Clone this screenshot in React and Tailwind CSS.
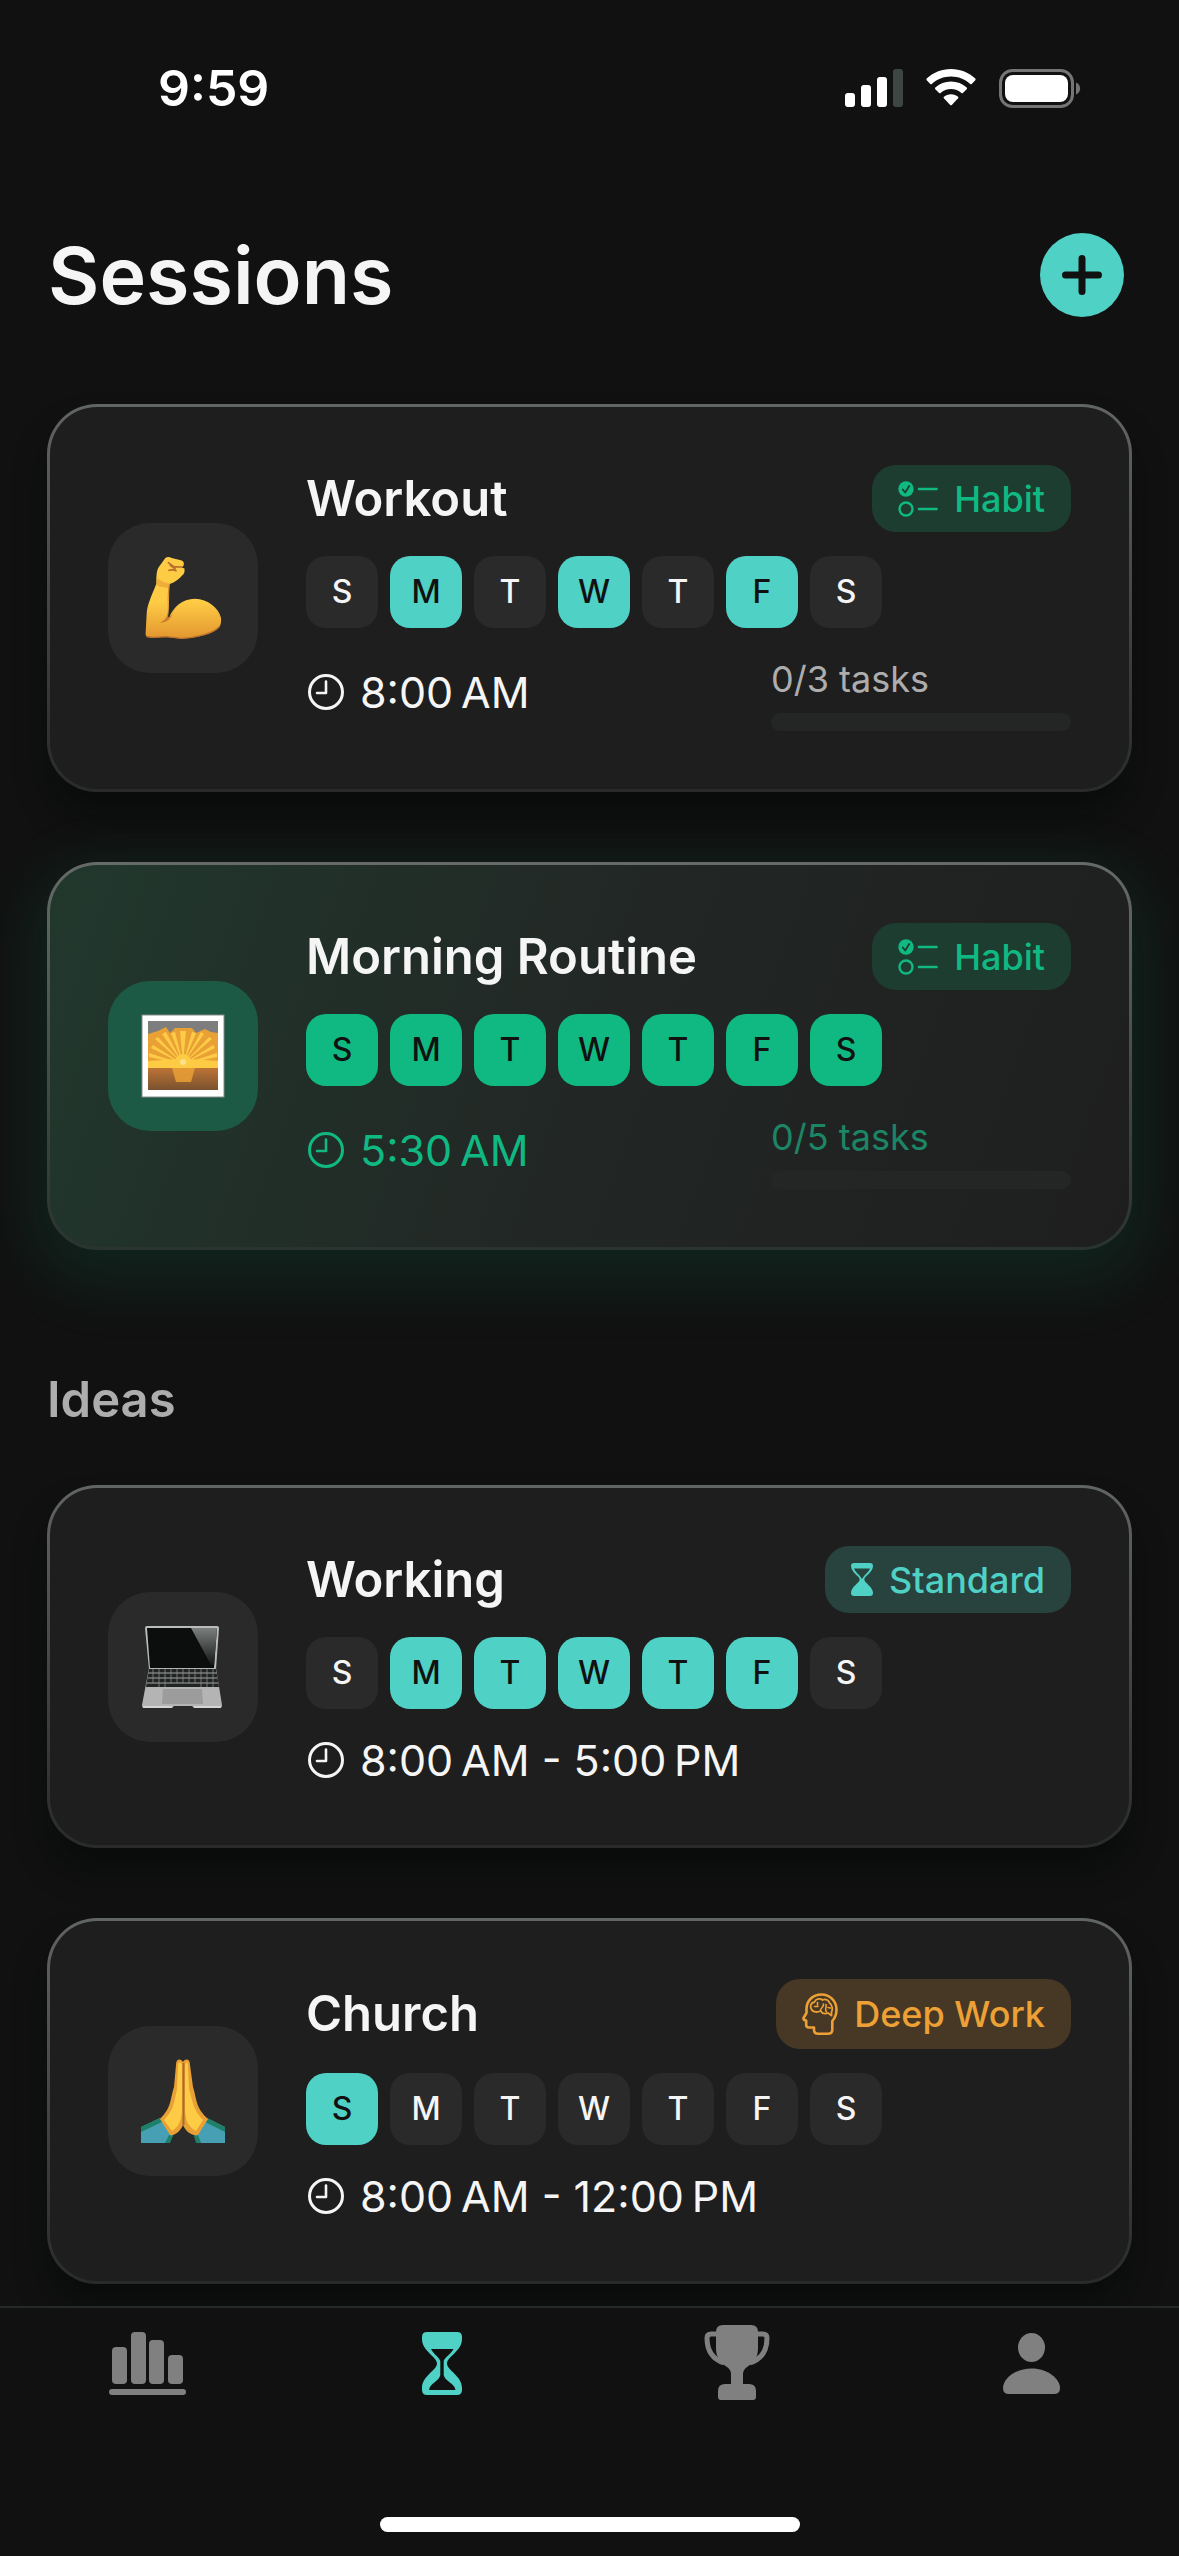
import React, { useState } from "react";

const DAYS = ["S", "M", "T", "W", "T", "F", "S"];

const Clock = () => (
  <svg className="h-9 w-9 shrink-0" viewBox="0 0 36 36" fill="none" stroke="currentColor" strokeWidth="3" strokeLinecap="round" strokeLinejoin="round">
    <circle cx="18" cy="18" r="16.5" />
    <path d="M18 7.500V19H9" strokeWidth="2.600" />
  </svg>
);

const Checklist = () => (
  <svg className="h-9 w-10" viewBox="0 0 40 36" fill="none" stroke="currentColor" strokeLinecap="round">
    <circle cx="8" cy="8" r="7.700" fill="currentColor" stroke="none" />
    <path d="M4.800 8.500l2.400 3 4-6.500" stroke="#1d3d31" strokeWidth="1.800" strokeLinejoin="round" />
    <circle cx="8" cy="28" r="6.500" strokeWidth="2.400" />
    <path d="M21 8h17.500M21 28h17.500" strokeWidth="2.600" />
  </svg>
);

const SmallHourglass = () => (
  <svg className="h-[33px] w-[22px]" viewBox="0 0 22 33" fill="currentColor">
    <path
      fillRule="evenodd"
      d="M3 0H19Q22 0 22 3C22 9.500 13.300 13 13.300 16.500S22 23.500 22 30Q22 33 19 33H3Q0 33 0 30C0 23.500 8.700 20 8.700 16.500S0 9.500 0 3Q0 0 3 0ZM3 5.500C4.500 9.500 9 12 10.500 15.500H11.500C13 12 17.500 9.500 19 5.500Z"
    />
  </svg>
);

const HeadBrain = () => (
  <svg className="h-[42px] w-9" viewBox="0 0 36 42" fill="none" stroke="currentColor" strokeWidth="2.600" strokeLinejoin="round" strokeLinecap="round">
    <path d="M12 34.500V37Q12 40.700 16 40.700H26Q30.300 40.700 30.300 37V28C33 25 34.500 21 34.500 16.500C34.500 8 28 1.500 19.500 1.500C10.500 1.500 4.500 8 4.500 16V20L1.500 25Q1.200 27 4.200 27.500V32Q4.200 34.500 7 34.500Z" />
    <path d="M9.500 16.500C7.500 13 9 9.500 12.500 9C14 5.500 18.500 5 20.500 7C24 5.500 27 7.500 27.500 10C30.500 12 31 16.500 29.500 19V22.500L26 20C22 21.500 19.500 19.500 18.500 18C15.500 19.500 11 19.500 9.500 16.500Z" strokeWidth="1.800" />
    <path d="M12.500 13.500H16M15.500 9.500V12M18.500 18C18 14.500 22 15 21.500 11M24 11.500C25 15 22 15.500 24.500 19M26 14.500L28.500 15" strokeWidth="1.600" />
  </svg>
);

const Muscle = () => (
  <svg className="h-[84px] w-[84px]" viewBox="123 138 252 252">
    <defs>
      <linearGradient id="arm" x1="0" y1="0" x2="0" y2="1">
        <stop offset="0.550" stopColor="#fecb45" />
        <stop offset="1" stopColor="#e2962f" />
      </linearGradient>
    </defs>
    <path
      d="M196 144C202 139 210 141 215 144L243 151Q254 154 251 166Q249 171 244 173L253 175Q256 188 248 195C238 207 225 217 209 222C206 250 209 290 204 320Q201 329 208 321C220 292 246 266 285 266C324 267 355 293 363 323Q365 340 358 351C339 371 292 384 245 386L199 381L158 383L141 382Q135 377 137 366L140 312C141 282 158 251 169 221C169 202 169 184 176 172Z"
      fill="url(#arm)"
    />
    <path d="M208 220C195 221 183 213 173 205L169 224C178 232 195 231 207 234Z" fill="#e9a035" opacity="0.700" />
    <path d="M207 224C199 260 207 298 202 314C199 326 190 333 180 338C200 337 211 328 218 312C210 321 204 323 204 320Z" fill="#c97a2c" />
    <path d="M205 158L221 170L246 171M211 166L225 176M207 181L218 179L228 182" fill="none" stroke="#b5702b" strokeWidth="5" strokeLinecap="round" />
    <path d="M140 379L158 382L199 380L245 385C290 383 338 371 357 351" fill="none" stroke="#bd732c" strokeWidth="4" />
  </svg>
);

const Sunrise = () => (
  <svg className="h-[84px] w-[84px]" viewBox="0 0 84 84">
    <defs>
      <clipPath id="photo">
        <rect x="7" y="7" width="70" height="69" />
      </clipPath>
      <linearGradient id="sea" x1="0" y1="0" x2="0" y2="1">
        <stop offset="0" stopColor="#bd7336" />
        <stop offset="1" stopColor="#79522e" />
      </linearGradient>
    </defs>
    <rect x="1" y="1" width="82" height="82" fill="#fff" stroke="#8a8a8a" strokeWidth="1" />
    <g clipPath="url(#photo)">
      <rect x="7" y="7" width="70" height="69" fill="#7e7e7e" />
      <path d="M7 20L17 17L25 13L29 19L34 14H51L55 19L64 15L70 18L77 19V60H7Z" fill="#e9a035" />
      <path d="M42 50L10 34L12 31ZM42 50L14 25L17 23ZM42 50L21 20L25 18ZM42 50L30 19L34 18ZM42 50L39 17H45ZM42 50L51 18L55 19ZM42 50L60 18L63 20ZM42 50L68 23L71 25ZM42 50L72 31L74 34ZM42 50L8 43V39ZM42 50L76 39V43Z" fill="#fecb45" />
      <circle cx="42" cy="48" r="8" fill="#fecb45" />
      <path d="M7 47L34 45H50L77 47V54H7Z" fill="#fecb45" />
      <rect x="7" y="54" width="70" height="22" fill="url(#sea)" />
      <path d="M31 54H54L50 68H35Z" fill="#e9a035" opacity="0.850" />
      <circle cx="42" cy="48" r="3" fill="#ffe08a" />
    </g>
  </svg>
);

const Laptop = () => (
  <svg className="h-[84px] w-[84px]" viewBox="0 0 84 84">
    <defs>
      <linearGradient id="glare" x1="0" y1="0" x2="0" y2="1">
        <stop offset="0" stopColor="#7b7f7e" />
        <stop offset="1" stopColor="#141716" />
      </linearGradient>
    </defs>
    <path d="M6 1H76Q78 1 78 3L75 44H8L4 3Q4 1 6 1Z" fill="#b9bcbb" />
    <path d="M6 3H76L73 43H9Z" fill="#0b0e0d" />
    <path d="M50 3H76L73 40H70Z" fill="url(#glare)" />
    <path d="M8 43H75L81 80Q81 83 79 83H53L51 81H33L31 83H3Q1 83 1 80Z" fill="#b4b4b4" />
    <path d="M8 44H75L78 62H5Z" fill="#202423" />
    <path d="M7 48H76M7 53H76M6 58H77" stroke="#a5a5a5" strokeWidth="1" />
    <path d="M12 44V58M18 44V62M24 44V62M30 44V58M36 44V58M42 44V58M48 44V58M54 44V58M60 44V62M66 44V62M72 44V62" stroke="#8d8d8d" strokeWidth="0.800" />
    <path d="M22 64H61L62 79H21Z" fill="#9c9c9c" />
    <path d="M2 82H31M53 82H80" stroke="#dedede" strokeWidth="1.500" />
  </svg>
);

const Prayer = () => (
  <svg className="h-[84px] w-[84px]" viewBox="0 0 84 84">
    <path d="M0 68L19 59L32 76L25 84H0ZM84 68L66 59L53 76L60 84H84Z" fill="#469fb3" />
    <path d="M0 68L19 59L21 63L0 73ZM84 68L66 59L64 63L84 73ZM28 76L32 77L29 84H24ZM57 76L53 77L55 84H60Z" fill="#1e8068" />
    <path d="M42 3C39 -1 35 0 35 6L33 28C29 40 31 48 19 60L29 76C33 77 39 73 42 66C45 73 51 77 57 76L67 60C54 48 56 40 52 28L49 6C49 0 45 -1 42 3Z" fill="#e9a035" />
    <path d="M41 5C38 2 37 4 37 8L36 30C33 43 33 51 23 61L31 72C39 67 41 59 41 50ZM44 5C47 2 47 4 47 8L48 30C52 43 52 51 62 61L55 72C46 67 44 59 44 50Z" fill="#fecb45" />
    <path d="M42.500 4V66" stroke="#a9682c" strokeWidth="2" />
  </svg>
);

const kinds = {
  habit: { label: "Habit", Icon: Checklist, style: "bg-[#1d3d31] text-[#10b981]" },
  standard: { label: "Standard", Icon: SmallHourglass, style: "bg-[#28423d] text-[#4fd1c5]" },
  deep: { label: "Deep Work", Icon: HeadBrain, style: "bg-[#463824] text-[#eda035] h-[70px]" },
};

const upcoming = [
  { title: "Workout", Emoji: Muscle, kind: "habit", days: [1, 3, 5], time: "8:00\u202fAM", tasks: [0, 3] },
  { title: "Morning Routine", Emoji: Sunrise, kind: "habit", days: [0, 1, 2, 3, 4, 5, 6], time: "5:30\u202fAM", tasks: [0, 5], active: true },
];

const ideas = [
  { title: "Working", Emoji: Laptop, kind: "standard", days: [1, 2, 3, 4, 5], time: "8:00\u202fAM - 5:00\u202fPM" },
  { title: "Church", Emoji: Prayer, kind: "deep", days: [0], time: "8:00\u202fAM - 12:00\u202fPM" },
];

const Badge = ({ kind }) => {
  const { label, Icon, style } = kinds[kind];
  return (
    <span className={`flex min-h-[67px] shrink-0 items-center gap-4 rounded-3xl px-[26px] text-[36px] leading-[44px] font-medium ${style}`}>
      <Icon />
      {label}
    </span>
  );
};

const DayChip = ({ day, on, active }) => {
  const color = on ? (active ? "bg-[#10b981] text-[#111111]" : "bg-[#4fd1c5] text-[#111111]") : "bg-[#2a2a2a] text-[#f5f5f5]";
  return <li className={`flex h-18 w-18 items-center justify-center rounded-[20px] text-[32px] font-medium ${color}`}>{day}</li>;
};

const SessionCard = ({ title, Emoji, kind, days, time, tasks, active }) => (
  <article
    className={`rounded-[50px] bg-linear-to-b p-[3px] ${
      active
        ? "from-[#666b69] to-[#29332f] shadow-[0_20px_60px_18px_rgba(16,185,129,0.110)]"
        : "from-[#626565] to-[#292b2a] shadow-[0_24px_30px_rgba(4,8,7,0.500)]"
    }`}
  >
    <div
      className={`flex items-center gap-12 rounded-[47px] p-[58px] ${
        active ? "bg-[linear-gradient(110deg,#21382d,#222725_50%,#1e1e1e)]" : "bg-[#1e1e1e]"
      }`}
    >
      <div className={`flex h-[150px] w-[150px] shrink-0 items-center justify-center rounded-[42px] ${active ? "bg-[#1d5a45]" : "bg-[#2a2a2a]"}`}>
        <Emoji />
      </div>
      <div className="flex min-w-0 flex-1 flex-col gap-6">
        <div className="flex items-center justify-between">
          <h3 className="text-[49px] leading-[60px] font-semibold text-[#f5f5f5]">{title}</h3>
          <Badge kind={kind} />
        </div>
        <ul className="flex gap-3">
          {DAYS.map((day, i) => (
            <DayChip key={i} day={day} on={days.includes(i)} active={active} />
          ))}
        </ul>
        <div className="flex items-center justify-between">
          <p className={`flex items-center gap-4 pl-[2px] text-[43px] leading-[54px] ${active ? "text-[#10b981]" : "text-[#f5f5f5]"}`}>
            <Clock />
            {time}
          </p>
          {tasks && (
            <div className="flex w-[300px] flex-col gap-[6px]">
              <span className={`text-[36px] leading-[55px] ${active ? "text-[#1c8565]" : "text-[#adadad]"}`}>
                {tasks[0]}/{tasks[1]} tasks
              </span>
              <div className="h-[18px] overflow-hidden rounded-full bg-[#242625]">
                <div className="h-full bg-[#10b981]" style={{ width: `${(tasks[0] / tasks[1]) * 100}%` }} />
              </div>
            </div>
          )}
        </div>
      </div>
    </div>
  </article>
);

const StatusBar = () => (
  <div className="flex items-center justify-between pt-[57px] pr-[98px] pl-[158px] text-white">
    <span className="text-[50px] leading-[62px] font-semibold">9:59</span>
    <div className="flex items-center gap-[23px]">
      {/* Signal */}
      <svg className="h-[38px] w-[58px]" viewBox="0 0 58 38" fill="currentColor">
        <rect x="0" y="24" width="10" height="14" rx="3" />
        <rect x="16" y="16" width="10" height="22" rx="3" />
        <rect x="32" y="8" width="10" height="30" rx="3" />
        <rect x="48" y="0" width="10" height="38" rx="3" fill="#3e4644" />
      </svg>
      {/* Wi-Fi */}
      <svg className="h-[38px] w-[50px]" viewBox="0 0 50 38" fill="currentColor">
        <path d="M25 0C15.500 0 7 3.600.700 9.600Q0 10.400.700 11.200L4.300 14.900Q5 15.500 5.800 14.900C11 10.100 17.600 7.400 25 7.400S39 10.100 44.200 14.900Q45 15.500 45.700 14.900L49.300 11.200Q50 10.400 49.300 9.600C43 3.600 34.500 0 25 0Z" />
        <path d="M25 12.600C19 12.600 13.500 14.800 9.300 18.600Q8.500 19.400 9.300 20.200L13.100 24Q13.800 24.600 14.600 24C17.400 21.500 21 20 25 20S32.600 21.500 35.400 24Q36.200 24.600 36.900 24L40.700 20.200Q41.500 19.400 40.700 18.600C36.500 14.800 31 12.600 25 12.600Z" />
        <path d="M25 25.200C22.300 25.200 19.800 26.200 17.900 27.800Q17.200 28.500 17.900 29.300L24.200 35.900Q25 36.600 25.800 35.900L32.100 29.300Q32.800 28.500 32.100 27.800C30.200 26.200 27.700 25.200 25 25.200Z" />
      </svg>
      {/* Battery */}
      <svg className="h-[39px] w-[82px]" viewBox="0 0 82 39">
        <rect x="1.500" y="1.500" width="72" height="36" rx="12" fill="none" stroke="#757575" strokeWidth="3" />
        <rect x="6" y="6" width="63" height="27" rx="8" fill="#fff" />
        <path d="M77 13.500C82.500 15.500 82.500 23.500 77 25.500Z" fill="#757575" />
      </svg>
    </div>
  </div>
);

const tabs = [
  {
    name: "Stats",
    icon: (
      <svg className="h-[76px] w-[77px]" viewBox="0 0 77 76" fill="currentColor">
        <rect x="3" y="22" width="15" height="37" rx="4" />
        <rect x="22" y="7" width="15" height="52" rx="4" />
        <rect x="40" y="15" width="15" height="44" rx="4" />
        <rect x="59" y="30" width="15" height="29" rx="4" />
        <rect x="0" y="64" width="77" height="6" rx="3" />
      </svg>
    ),
  },
  {
    name: "Sessions",
    icon: (
      <svg className="h-[63px] w-10" viewBox="0 0 40 63" fill="currentColor">
        <path
          fillRule="evenodd"
          d="M5 0H35Q40 0 40 5V7C40 19 25 25 25 31.500S40 44 40 56V58Q40 63 35 63H5Q0 63 0 58V56C0 44 15 38 15 31.500S0 19 0 7V5Q0 0 5 0ZM9 17C11.500 22 17 25 18.300 29V43C17.500 49 8 51 7 58H33.500C32.500 51 22.500 49 21.700 43V29C23 25 29 22 31.500 17Z"
        />
      </svg>
    ),
  },
  {
    name: "Achievements",
    icon: (
      <svg className="h-[76px] w-[66px]" viewBox="0 0 66 76" fill="currentColor">
        <path d="M19 0H47Q54 0 54 7V23C54 34 49 38 43 42Q39 45 39 49V59H45Q52 59 52 66V72Q52 75 49 75H17Q14 75 14 72V66Q14 59 21 59H27V49Q27 45 23 42C17 38 12 34 12 23V7Q12 0 19 0Z" />
        <path d="M14 9H7Q3 9 3 13C3 25 8 34 20 38M52 9H59Q63 9 63 13C63 25 58 34 46 38" fill="none" stroke="currentColor" strokeWidth="5" />
      </svg>
    ),
  },
  {
    name: "Profile",
    icon: (
      <svg className="h-[61px] w-[57px]" viewBox="0 0 57 61" fill="currentColor">
        <ellipse cx="28.500" cy="14.500" rx="13.500" ry="14.500" />
        <path d="M28.500 35.500C45 35.500 57 46 57 55Q57 61 51 61H6Q0 61 0 55C0 46 12 35.500 28.500 35.500Z" />
      </svg>
    ),
  },
];

const TabBar = () => {
  const [current, setCurrent] = useState("Sessions");

  return (
    <nav className="sticky bottom-0 mt-auto border-t-2 border-[#252a28] bg-[#111111]">
      <div className="grid grid-cols-4 pt-[17px]">
        {tabs.map(({ name, icon }) => (
          <button
            key={name}
            type="button"
            aria-label={name}
            onClick={() => setCurrent(name)}
            className={`flex h-[76px] items-center justify-center ${current === name ? "text-[#4fd1c5]" : "text-[#808080]"}`}
          >
            {icon}
          </button>
        ))}
      </div>
      {/* Home indicator */}
      <div className="mx-auto mt-[116px] mb-6 h-[15px] w-[420px] rounded-full bg-white" />
    </nav>
  );
};

export default function App() {
  return (
    <div className="flex min-h-screen flex-col bg-[#111111] font-['Inter','Liberation_Sans',sans-serif]">
      <StatusBar />
      <header className="mt-[114px] flex items-center justify-between pr-[55px] pl-12">
        <h1 className="text-[79px] leading-[84px] font-semibold text-[#f5f5f5]">Sessions</h1>
        <button type="button" aria-label="Add session" className="flex h-[84px] w-[84px] items-center justify-center rounded-full bg-[#4fd1c5]">
          <svg className="h-10 w-10" viewBox="0 0 40 40" stroke="#111111" strokeWidth="7" strokeLinecap="round">
            <path d="M20 3.500V36.500M3.500 20H36.500" />
          </svg>
        </button>
      </header>
      <main className="mt-[87px] px-[47px] pb-[22px]">
        <section className="flex flex-col gap-[70px]">
          {upcoming.map((session) => (
            <SessionCard key={session.title} {...session} />
          ))}
        </section>
        <h2 className="relative mt-[120px] mb-[55px] text-[49px] leading-[60px] font-semibold text-[#adadad]">Ideas</h2>
        <section className="flex flex-col gap-[70px]">
          {ideas.map((session) => (
            <SessionCard key={session.title} {...session} />
          ))}
        </section>
      </main>
      <TabBar />
    </div>
  );
}
